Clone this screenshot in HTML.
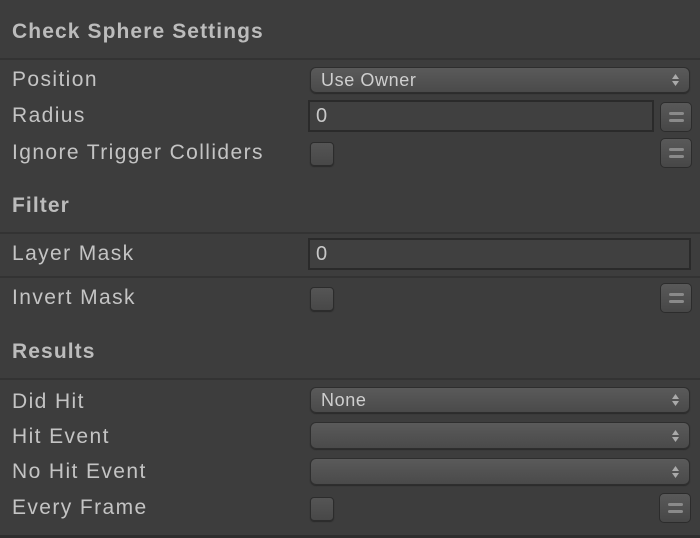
<!DOCTYPE html>
<html><head><style>
*{margin:0;padding:0;box-sizing:border-box}
body{width:700px;height:538px;background:#3d3d3d;position:relative;overflow:hidden;font-family:"Liberation Sans",sans-serif;color:#c4c4c4}
.t{position:absolute;left:12px;font-size:21px;letter-spacing:1.4px;line-height:24px;white-space:nowrap;margin-top:1px}
.h{font-weight:bold;color:#bcbcbc;letter-spacing:1.1px}
.line{position:absolute;left:0;width:700px;height:2px;background:#333}
.dd{position:absolute;left:310px;width:380px;border-radius:6px;background:linear-gradient(#5a5a5a,#4a4a4a);border:1px solid #2e2e2e;box-shadow:0 1px 1px #2a2a2a;font-size:18px;letter-spacing:0.6px;color:#cfcfcf;padding-left:10px;line-height:24px}
.arr{position:absolute;right:10px;top:50%;transform:translateY(-50%);width:7px;height:12px}
.fld{position:absolute;left:308px;background:#404040;border:2px solid #2a2a2a;font-size:20px;padding-left:6px;color:#c8c8c8}
.cb{position:absolute;left:310px;width:24px;height:24px;border-radius:4px;background:linear-gradient(#555,#484848);border:1px solid #2c2c2c;box-shadow:0 1px 1px #2a2a2a}
.btn{position:absolute;left:660px;width:32px;height:30px;border-radius:5px;background:linear-gradient(#595959,#474747);border:1px solid #2c2c2c}
.btn:before,.btn:after{content:"";position:absolute;left:8px;width:15px;height:3px;border-radius:2px;background:#8a8a8a}
.btn:before{top:9px}.btn:after{top:16px}
</style></head><body>
<div class="t h" style="top:19px">Check Sphere Settings</div>
<div class="line" style="top:58px"></div>
<div class="t" style="top:67px">Position</div>
<div class="dd" style="top:67px;height:26px">Use Owner<svg class="arr" viewBox="0 0 7 12"><path d="M3.5 0L7 5H0z M3.5 12L7 7H0z" fill="#aaa"/></svg></div>
<div class="t" style="top:103px">Radius</div>
<div class="fld" style="top:100px;width:346px;height:32px;line-height:28px">0</div>
<div class="btn" style="top:102px"></div>
<div class="t" style="top:140px">Ignore Trigger Colliders</div>
<div class="cb" style="top:142px"></div>
<div class="btn" style="top:138px"></div>
<div class="t h" style="top:193px">Filter</div>
<div class="line" style="top:232px"></div>
<div class="t" style="top:241px">Layer Mask</div>
<div class="fld" style="top:238px;width:383px;height:32px;line-height:28px">0</div>
<div class="line" style="top:276px"></div>
<div class="t" style="top:285px">Invert Mask</div>
<div class="cb" style="top:287px"></div>
<div class="btn" style="top:283px"></div>
<div class="t h" style="top:339px">Results</div>
<div class="line" style="top:378px"></div>
<div class="t" style="top:389px">Did Hit</div>
<div class="dd" style="top:387px;height:26px">None<svg class="arr" viewBox="0 0 7 12"><path d="M3.5 0L7 5H0z M3.5 12L7 7H0z" fill="#aaa"/></svg></div>
<div class="t" style="top:424px">Hit Event</div>
<div class="dd" style="top:422px;height:27px"><svg class="arr" viewBox="0 0 7 12"><path d="M3.5 0L7 5H0z M3.5 12L7 7H0z" fill="#aaa"/></svg></div>
<div class="t" style="top:459px">No Hit Event</div>
<div class="dd" style="top:458px;height:27px"><svg class="arr" viewBox="0 0 7 12"><path d="M3.5 0L7 5H0z M3.5 12L7 7H0z" fill="#aaa"/></svg></div>
<div class="t" style="top:495px">Every Frame</div>
<div class="cb" style="top:497px"></div>
<div class="btn" style="top:493px;left:659px"></div>
<div style="position:absolute;left:0;top:535px;width:700px;height:3px;background:#2e2e2e"></div>
</body></html>
